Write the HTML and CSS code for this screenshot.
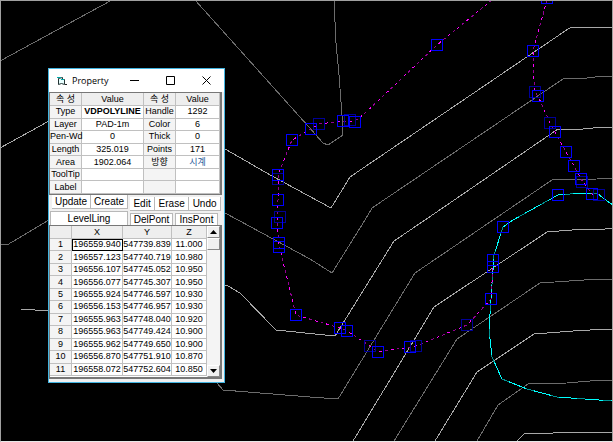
FILE: index.html
```
<!DOCTYPE html>
<html lang="ko">
  <head>
    <meta charset="UTF-8" />
    <meta name="viewport" content="width=device-width, initial-scale=1.0" />
    <title>Property</title>
    <link rel="stylesheet" href="styles.css" />
  </head>
  <body>
    <main class="workspace">
      <svg class="drawing" viewBox="0 0 613 442" preserveAspectRatio="xMinYMin slice" aria-hidden="true">
        <defs>
          <rect id="grip" x="-5.5" y="-5.5" width="11" height="11" />
          <path id="boundary" d="M492 0L437 45L364 114L355 121L343 121L319 124L311 129L292 140L278 175L278 200L277 223L279 245L296 315L340 328L347 331L370 346L378 352L410 347L416 346L467 325L491 299L493 265" />
          <path id="boundary-east" d="M547 0L533 51L533 67L535 92L538 96L550 123L555 132L566 152L574 166L581 179L592 194L599 195" />
          <path id="road" d="M613 205L610 203L598 194L583 193L558 195L513 220L503 227L494 255L493 270L491 299L489 330L492 357L502 379L527 389L557 397L613 401" />
        </defs>

        <!-- contour lines -->
        <g class="contour">
          <path d="M0 61L112 0" />
          <path d="M195 0L308 126L323 143L328 145L343 135L342 115L339 75L336 43L334 0" />
          <path d="M0 244L7 245L49 220" />
          <path d="M225 213L238 220L310 259L332 273L365 220L372 208L563 79L587 78L595 77L613 76" />
          <path d="M217 383L223 390L310 397L338 399L415 273L493 220L552 180L597 179L613 178" />
          <path d="M394 441L457 339L540 283L584 280L613 279" />
          <path d="M477 441L498 405L528 384L567 383L590 381L613 380" />
        </g>
        <g class="contour contour-major">
          <path d="M0 148L49 121" />
          <path d="M225 149L272 176L331 208L350 177L568 29L572 27L613 27" />
          <path d="M21 309L49 311" />
          <path d="M225 285L228 286L240 293L276 330L315 334L335 336L394 241L425 220L558 129L583 129L593 128L613 127" />
          <path d="M353 441L434 307L547 232L572 230L605 229L613 228" />
          <path d="M435 441L477 372L534 334L573 331L608 329L613 329" />
          <path d="M517 441L524 434L553 433L613 432" />
        </g>

        <use href="#road" class="road-dim" />
        <use href="#road" class="road" />
        <use href="#boundary" class="boundary-dim" />
        <use href="#boundary" class="boundary" />
        <use href="#boundary-east" class="boundary-dim" />
        <use href="#boundary-east" class="boundary" />

        <!-- vertex grips -->
        <g class="grips grips-dim">
          <use href="#grip" x="319" y="124" />
          <use href="#grip" x="350" y="120" />
          <use href="#grip" x="535" y="92" />
          <use href="#grip" x="550" y="123" />
          <use href="#grip" x="582" y="182" />
          <use href="#grip" x="599" y="195" />
          <use href="#grip" x="278" y="179" />
          <use href="#grip" x="280" y="217" />
          <use href="#grip" x="370" y="346" />
          <use href="#grip" x="416" y="346" />
          <use href="#grip" x="467" y="325" />
        </g>
        <g class="grips">
          <use href="#grip" x="437" y="45" />
          <use href="#grip" x="547" y="-2" />
          <use href="#grip" x="533" y="51" />
          <use href="#grip" x="538" y="96" />
          <use href="#grip" x="555" y="132" />
          <use href="#grip" x="566" y="152" />
          <use href="#grip" x="574" y="166" />
          <use href="#grip" x="581" y="179" />
          <use href="#grip" x="592" y="194" />
          <use href="#grip" x="558" y="195" />
          <use href="#grip" x="311" y="129" />
          <use href="#grip" x="343" y="121" />
          <use href="#grip" x="355" y="122" />
          <use href="#grip" x="292" y="140" />
          <use href="#grip" x="278" y="175" />
          <use href="#grip" x="278" y="200" />
          <use href="#grip" x="277" y="223" />
          <use href="#grip" x="279" y="243" />
          <use href="#grip" x="279" y="247" />
          <use href="#grip" x="296" y="315" />
          <use href="#grip" x="340" y="328" />
          <use href="#grip" x="347" y="331" />
          <use href="#grip" x="378" y="352" />
          <use href="#grip" x="410" y="347" />
          <use href="#grip" x="491" y="299" />
          <use href="#grip" x="493" y="260" />
          <use href="#grip" x="493" y="267" />
          <use href="#grip" x="503" y="227" />
        </g>
      </svg>

      <section class="dialog">
        <header class="titlebar">
          <svg class="app-icon" viewBox="0 0 10 10" aria-hidden="true">
            <path d="M1.5 2.5L5.5 1.5V3.5H7.5V8.5L4.5 7.5L1.5 8.5Z" fill="#e8ffff" stroke="#233" />
            <path d="M0 1.5H4M4 3.5H7" stroke="#0aa" />
            <path d="M8 8.5H10" stroke="#222" />
          </svg>
          <h1 class="title">Property</h1>
          <button class="caption" aria-label="Minimize">
            <svg viewBox="0 0 9 9"><path d="M0 4.5H9" /></svg>
          </button>
          <button class="caption" aria-label="Maximize">
            <svg viewBox="0 0 9 9"><path d="M.5 .5H8.5V8.5H.5Z" /></svg>
          </button>
          <button class="caption" aria-label="Close">
            <svg viewBox="0 0 9 9"><path d="M.5 .5L8.5 8.5M8.5 .5L.5 8.5" /></svg>
          </button>
        </header>

        <table class="grid properties">
          <colgroup>
            <col class="col-name" />
            <col class="col-value" />
            <col class="col-name" />
            <col />
          </colgroup>
          <thead>
            <tr><th>속 성</th><th>Value</th><th>속 성</th><th>Value</th></tr>
          </thead>
          <tbody>
            <tr><th>Type</th><td class="strong">VDPOLYLINE</td><th>Handle</th><td>1292</td></tr>
            <tr><th>Layer</th><td>PAD-1m</td><th>Color</th><td>6</td></tr>
            <tr><th>Pen-Wd</th><td>0</td><th>Thick</th><td>0</td></tr>
            <tr><th>Length</th><td>325.019</td><th>Points</th><td>171</td></tr>
            <tr><th>Area</th><td>1902.064</td><th>방향</th><td class="direction">시계</td></tr>
            <tr><th>ToolTip</th><td></td><th></th><td></td></tr>
            <tr><th>Label</th><td></td><th></th><td></td></tr>
          </tbody>
        </table>

        <div class="actions">
          <div class="group group-left">
            <button>Update</button>
            <button>Create</button>
          </div>
          <div class="group group-right">
            <button>Edit</button>
            <button>Erase</button>
            <button>Undo</button>
          </div>
        </div>
        <div class="tabs">
          <button class="tab tab-active">LevelLing</button>
          <button class="tab">DelPont</button>
          <button class="tab">InsPont</button>
        </div>

        <div class="points-pane">
          <table class="grid points">
            <colgroup>
              <col class="col-index" />
              <col class="col-x" />
              <col class="col-y" />
              <col />
            </colgroup>
            <thead>
              <tr><th></th><th>X</th><th>Y</th><th>Z</th></tr>
            </thead>
            <tbody>
              <tr><th>1</th><td class="selected">196559.940</td><td>547739.839</td><td>11.000</td></tr>
              <tr><th>2</th><td>196557.123</td><td>547740.719</td><td>10.980</td></tr>
              <tr><th>3</th><td>196556.107</td><td>547745.052</td><td>10.950</td></tr>
              <tr><th>4</th><td>196556.077</td><td>547745.307</td><td>10.950</td></tr>
              <tr><th>5</th><td>196555.924</td><td>547746.597</td><td>10.930</td></tr>
              <tr><th>6</th><td>196556.153</td><td>547746.957</td><td>10.930</td></tr>
              <tr><th>7</th><td>196555.963</td><td>547748.040</td><td>10.920</td></tr>
              <tr><th>8</th><td>196555.963</td><td>547749.424</td><td>10.900</td></tr>
              <tr><th>9</th><td>196555.962</td><td>547749.650</td><td>10.900</td></tr>
              <tr><th>10</th><td>196556.870</td><td>547751.910</td><td>10.870</td></tr>
              <tr><th>11</th><td>196558.072</td><td>547752.604</td><td>10.850</td></tr>
            </tbody>
          </table>
          <div class="scrollbar">
            <button class="scroll-button" aria-label="Scroll up">
              <svg viewBox="0 0 7 4"><path d="M0 4L3.5 0L7 4Z" /></svg>
            </button>
            <div class="thumb"></div>
            <button class="scroll-button scroll-down" aria-label="Scroll down">
              <svg viewBox="0 0 7 4"><path d="M0 0L3.5 4L7 0Z" /></svg>
            </button>
          </div>
        </div>
      </section>
    </main>
  </body>
</html>
```

FILE: styles.css
```
* {
  box-sizing: border-box;
}

body {
  margin: 0;
  font-family: "Liberation Sans Narrow", "Liberation Sans", "Noto Sans CJK KR", sans-serif;
  font-size: 9px;
  color: #000;
}

button {
  margin: 0;
  padding: 0;
  border: 0;
  background: #fff;
  font: inherit;
  color: inherit;
}

.workspace {
  position: relative;
  height: 100vh;
  overflow: hidden;
  background: #000;
  border: 1px solid #a0a0a0;
  border-bottom-color: #e8e8e8;
}

/* drawing */
.drawing {
  position: absolute;
  inset: -1px;
  width: 100vw;
  height: 100vh;
  fill: none;
  shape-rendering: crispEdges;
}

.contour {
  stroke: #6c6c6c;
}

.contour-major {
  stroke: #a8a8a8;
}

.road-dim {
  stroke: #009090;
}

.road {
  stroke: #00ffff;
  stroke-dasharray: 18 8;
}

.boundary-dim {
  stroke: #900090;
  stroke-dasharray: 3 9;
}

.boundary {
  stroke: #ff00ff;
  stroke-dasharray: 3 9;
  stroke-dashoffset: 6;
}

.grips {
  stroke: #0000ff;
}

.grips-dim {
  stroke: #000098;
}

/* property window */
.dialog {
  position: absolute;
  left: 47px;
  top: 67px;
  width: 177px;
  padding-bottom: 3px;
  background: #f0f0f0;
  border: 1px solid #42b4e0;
}

.titlebar {
  display: flex;
  align-items: center;
  height: 23px;
  padding-left: 8px;
  background: #fff;
}

.app-icon {
  width: 10px;
  height: 10px;
}

.title {
  flex: 1;
  margin: 0 0 0 5px;
  font: 9px "Open Sans", sans-serif;
}

.caption {
  display: flex;
  justify-content: center;
  width: 36px;
}

.caption svg {
  width: 9px;
  height: 9px;
  fill: none;
  stroke: #000;
}

.grid {
  table-layout: fixed;
  border-spacing: 0;
  line-height: 11px;
  text-align: center;
  background: #fff;
}

.grid th,
.grid td {
  padding: 0;
  border-right: 1px solid #c0c0c0;
  border-bottom: 1px solid #c0c0c0;
  font-weight: normal;
  white-space: nowrap;
}

.grid th {
  background: #f4f4f4;
}

.grid thead th {
  height: 13px;
  background: #eee;
}

.grid .strong {
  font-weight: bold;
}

.grid .direction {
  color: #2a5a9a;
}

.properties {
  width: 173px;
  height: 103px;
  border: 1px solid #777;
  border-right-width: 2px;
}

.col-name {
  width: 32px;
}

.col-value {
  width: 62px;
}

.actions,
.tabs {
  display: flex;
  gap: 2px;
  font-size: 10px;
  line-height: 12px;
}

.actions {
  height: 16px;
  padding: 0 3px;
}

.tabs {
  height: 14px;
  padding: 0 1px;
}

.group {
  display: flex;
  height: 14px;
}

.group button {
  flex: auto;
  border: 1px solid #b8b8b8;
  border-width: 0 1px 1px 0;
}

.group-left {
  width: 76px;
}

.group-right {
  flex: 1;
  align-self: flex-end;
}

.tab {
  align-self: flex-end;
  width: 43px;
  height: 12px;
  border: 1px solid #b8b8b8;
  border-bottom: 0;
}

.tab-active {
  width: 78px;
  height: 14px;
}

.points-pane {
  display: flex;
  width: 173px;
  height: 154px;
  border: 1px solid #777;
  border-width: 1px 2px 2px 1px;
  background: #fff;
}

.points {
  flex: 1;
  height: 150px;
}

.col-index {
  width: 22px;
}

.col-x {
  width: 51px;
}

.col-y {
  width: 49px;
}

.grid .selected {
  outline: 1px solid #000;
  outline-offset: -1px;
}

.scrollbar {
  display: flex;
  flex-direction: column;
  width: 13px;
  background: #f4f4f4;
}

.scroll-button,
.thumb {
  height: 12px;
  background: #f0f0f0;
  border: 1px solid #fff;
  border-right-color: #888;
  border-bottom-color: #888;
}

.scroll-button {
  display: flex;
  align-items: center;
  justify-content: center;
}

.scroll-button svg {
  width: 7px;
  height: 4px;
}

.scroll-down {
  margin-top: auto;
}
```
